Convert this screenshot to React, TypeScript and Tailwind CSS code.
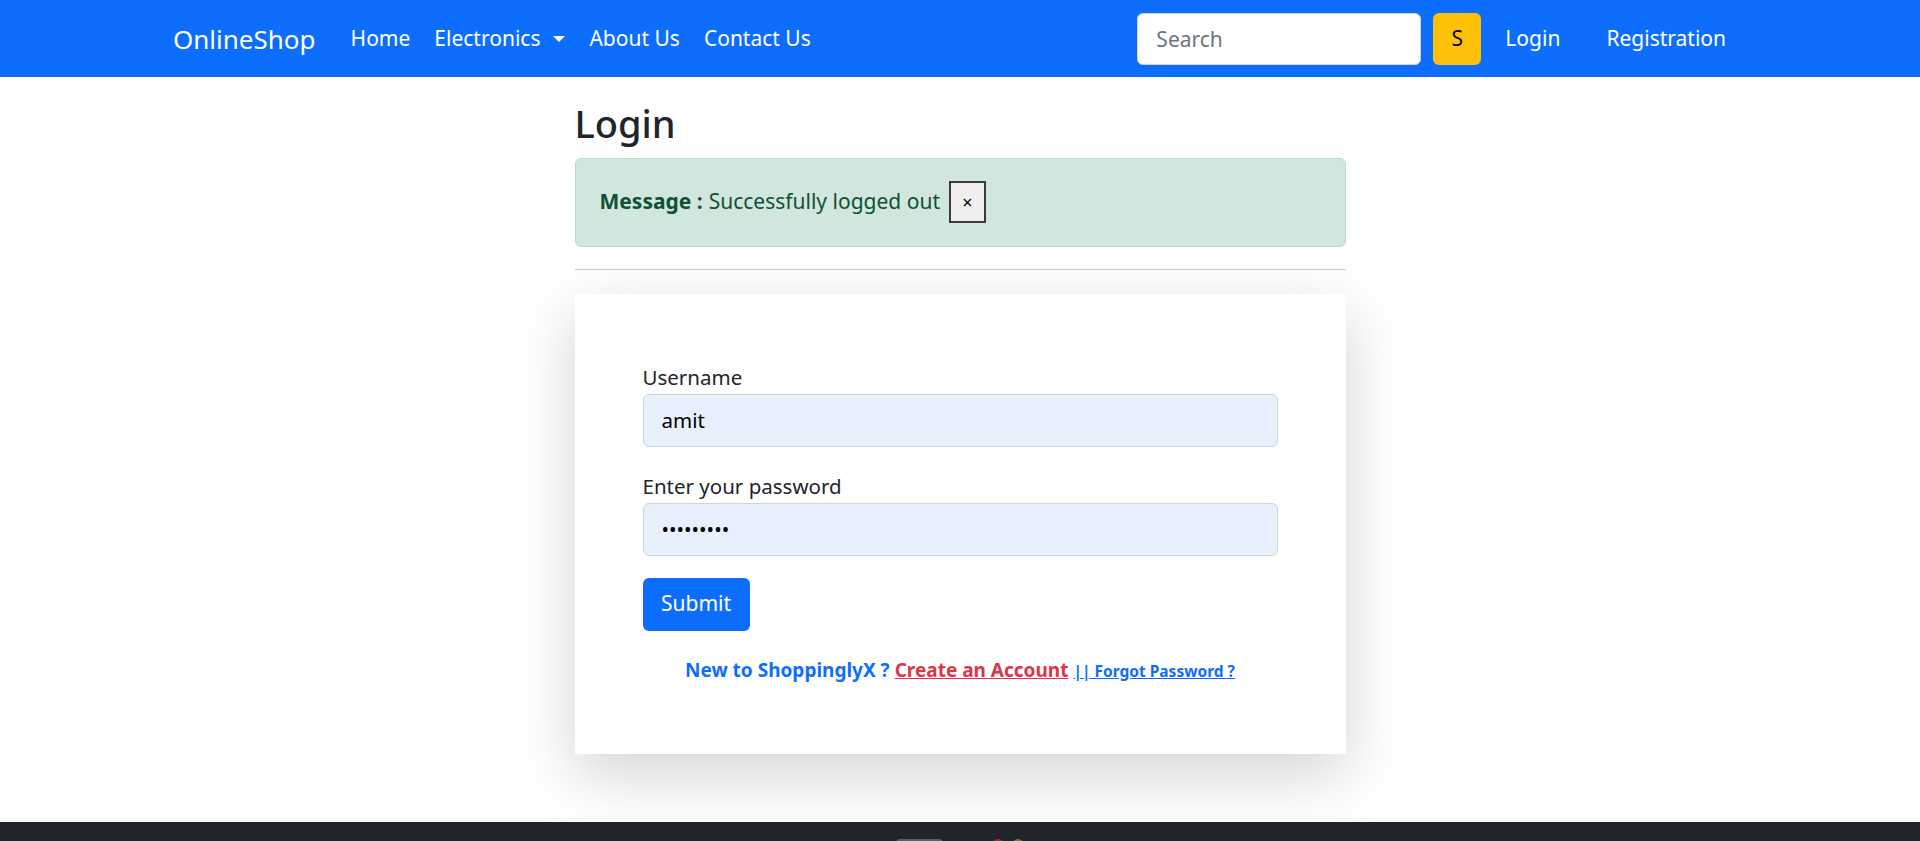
import React from "react";

const navLinks = ["Home", "About Us", "Contact Us"];

const Navbar = () => {
  return (
    <nav className="h-[77px] bg-[#0d6efd] flex items-center pl-[173px] pr-[194px]">
      <a href="#" className="text-[26px] text-white mr-[23px] leading-none">
        OnlineShop
      </a>
      <ul className="flex items-center text-[21px] text-white">
        <li className="px-[12px]">
          <a href="#">{navLinks[0]}</a>
        </li>
        <li className="px-[12px] flex items-center">
          <a href="#">Electronics</a>
          <span className="ml-[13px] w-0 h-0 border-x-[6px] border-x-transparent border-t-[6px] border-t-white" />
        </li>
        <li className="px-[12px]">
          <a href="#">{navLinks[1]}</a>
        </li>
        <li className="px-[12px]">
          <a href="#">{navLinks[2]}</a>
        </li>
      </ul>
      <div className="ml-auto flex items-center">
        <form className="flex items-center gap-[12px]">
          <input
            type="search"
            placeholder="Search"
            className="w-[284px] h-[52px] rounded-[6px] bg-white border border-[#ced4da] px-[18px] text-[21px] text-[#212529] placeholder:text-[#6c757d] outline-none"
          />
          <button
            type="button"
            className="w-[48px] h-[52px] rounded-[6px] bg-[#ffc107] text-[21px] text-black"
          >
            S
          </button>
        </form>
        <ul className="flex items-center text-[21px] text-white ml-[24px]">
          <li>
            <a href="#">Login</a>
          </li>
          <li className="ml-[46px]">
            <a href="#">Registration</a>
          </li>
        </ul>
      </div>
    </nav>
  );
};

const LoginCard = () => {
  return (
    <div className="mt-[24px] bg-white shadow-[0_20px_60px_rgba(0,0,0,0.175)] p-[68px]">
      <form>
        <label className="block text-[20.5px] leading-[30px] text-[#212529] mb-[2px]">
          Username
        </label>
        <input
          type="text"
          defaultValue="amit"
          className="block w-full h-[53px] rounded-[6px] bg-[#e8f0fe] border border-[#ced4da] px-[18px] text-[20.5px] text-black outline-none"
        />
        <label className="block mt-[24px] text-[20.5px] leading-[30px] text-[#212529] mb-[2px]">
          Enter your password
        </label>
        <input
          type="password"
          defaultValue="amit12345"
          className="block w-full h-[53px] rounded-[6px] bg-[#e8f0fe] border border-[#ced4da] px-[18px] text-[20px] text-black outline-none"
        />
        <button
          type="button"
          className="mt-[22px] w-[107px] h-[53px] rounded-[6px] bg-[#0d6efd] text-white text-[21px]"
        >
          Submit
        </button>
        <div className="mt-[24px] text-center text-[19px] leading-[30px] font-bold text-[#0d6efd]">
          New to ShoppinglyX ?{" "}
          <a href="#" className="text-[#dc3545] underline">
            Create an Account
          </a>{" "}
          <a href="#" className="text-[15.5px] underline">
            || Forgot Password ?
          </a>
        </div>
      </form>
    </div>
  );
};

export default function App() {
  return (
    <div className="min-h-screen bg-white font-['Noto_Sans',sans-serif] text-[#212529]">
      <Navbar />
      <main className="w-[771px] mx-auto pb-[68px]">
        <h2 className="mt-[24px] text-[38px] leading-[1.2] font-medium text-[#212529]">
          Login
        </h2>
        <div className="mt-[11px] h-[89px] flex items-center px-[24px] rounded-[6px] bg-[#d1e7dd] border border-[#badbcc] text-[21px] text-[#0f5132]">
          <strong className="font-bold">Message :</strong>
          <span className="ml-[6px]">Successfully logged out</span>
          <button
            type="button"
            className="ml-[9px] w-[37px] h-[42px] bg-[#efefef] border-2 border-[#3a3a3a] text-[18px] text-black"
          >
            ×
          </button>
        </div>
        <hr className="mt-[22px] border-0 h-px bg-[#c8c9ca]" />
        <LoginCard />
      </main>
      <footer className="bg-[#212529] pt-[17px] pb-[40px]">
        <div className="flex justify-center items-start gap-[48px]">
          <div className="w-[47px] h-[30px] rounded-[4px] bg-[#5a5f66]" />
          <div className="flex gap-[7px]">
            <div className="w-[14px] h-[14px] rounded-full bg-[#7a3b4a]" />
            <div className="w-[12px] h-[14px] rounded-full bg-[#7a7248]" />
          </div>
        </div>
        <p className="mt-[20px] text-center text-[16px] text-white">
          Copyright © OnlineShop
        </p>
      </footer>
    </div>
  );
}
